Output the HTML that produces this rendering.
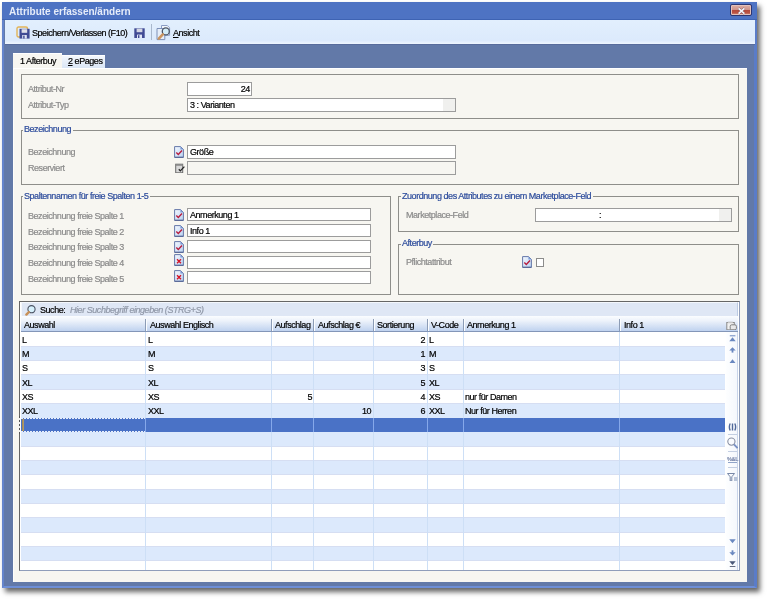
<!DOCTYPE html><html><head><meta charset="utf-8"><style>
*{box-sizing:border-box;margin:0;padding:0}
html,body{width:768px;height:599px;overflow:hidden;background:#fff;font-family:"Liberation Sans",sans-serif;font-size:9px;letter-spacing:-0.45px;color:#000}
#root{position:absolute;left:0;top:0;width:768px;height:599px;filter:blur(0.35px)}
.a{position:absolute}
.t{line-height:10px;white-space:nowrap;will-change:transform;-webkit-text-stroke:0.2px currentColor}
#win{left:2px;top:2px;width:755px;height:586px;background:#6279a8;box-shadow:3px 4px 5px rgba(0,0,0,.6);border-left:2px solid #6484cc;border-bottom:2px solid #6d8ed6;border-right:3px solid #5a7cc8}
#title{left:2px;top:2px;width:755px;height:17.7px;background:#4e73c3;border-bottom:1px solid #3e63b3}
#title span{position:absolute;will-change:transform;left:7.4px;top:4.5px;line-height:10px;font-size:10px;font-weight:bold;letter-spacing:0px;color:#e6ecf9}
#close{left:730.2px;top:4.2px;width:21.5px;height:11.5px;border:1px solid #2a3572;border-radius:2px;box-shadow:inset 0 0 0 1px #e4c2ba;background:linear-gradient(#dcb0a8 0%,#cf948a 45%,#b4483a 52%,#bb5544 80%,#d9a39a 100%)}
#tb{left:5px;top:19.75px;width:749.5px;height:24.3px;background:linear-gradient(#e2effd,#dceafc 85%,#eef5fe)}
#tbl{left:5px;top:44.4px;width:749.5px;height:1px;background:#586c9c}
#panel{left:12.7px;top:67.7px;width:734.3px;height:514.3px;background:#f7f6f1;border-top:1px solid #fff;border-left:1px solid #fdfdfb}
.grp{border:1px solid #8e8e8a}
.cap{color:#2d4c9c;background:#f7f6f1;padding:0 1.5px 0 1px}
.lbl{color:#8a8a8a}
.tx{border:1px solid #9c9c9c;background:#fff}
.row{left:20.5px;width:704.5px;height:14.27px}
.cs{width:1px;background:#cddff6}
</style></head><body>
<div id="root">
<svg width="0" height="0" style="position:absolute"><defs><linearGradient id="gd" x1="0" y1="0" x2="1" y2="1"><stop offset="0" stop-color="#f4f8ff"/><stop offset="1" stop-color="#b9d2f2"/></linearGradient></defs></svg>
<div id="win" class="a"></div>
<div id="title" class="a"><span>Attribute erfassen/ändern</span></div>
<div id="close" class="a"></div>
<svg class="a" style="left:736.7px;top:6.5px;" width="9" height="8" viewBox="0 0 9 8"><path d="M1.6 1.3L7.4 6.7M7.4 1.3L1.6 6.7" stroke="#6a4a58" stroke-width="2.6" opacity=".6"/><path d="M1.6 1.3L7.4 6.7M7.4 1.3L1.6 6.7" stroke="#f4f4fa" stroke-width="1.6"/></svg>
<div id="tb" class="a"></div><div id="tbl" class="a"></div>
<div class="a t " style="left:32px;top:28.00px;">Speichern/Verlassen (F10)</div>
<div class="a t " style="left:173.3px;top:28.00px;"><u>A</u>nsicht</div>
<div class="a " style="left:151.2px;top:23.8px;width:1.00px;height:16.20px;background:#a9b8cc"></div>
<svg class="a" style="left:15.5px;top:25.8px;" width="15" height="13" viewBox="0 0 15 13"><rect x="1" y="1" width="10.5" height="10" rx="1.5" fill="none" stroke="#e2b458" stroke-width="1.4"/><path d="M3.5 2.8H13.6V12.6H3.5Z" fill="#3f4a94"/><rect x="5.6" y="3.2" width="5.6" height="3.6" fill="#dfe0ea"/><rect x="6.2" y="9" width="4.6" height="3.6" fill="#dfe4f4"/><rect x="7.2" y="9.6" width="1.4" height="3" fill="#3f4a94"/></svg>
<svg class="a" style="left:134.2px;top:27.5px;" width="11" height="10.5" viewBox="0 0 11 10.5"><path d="M.3 .3H10.7V10.2H.3Z" fill="#404a94"/><rect x="2.6" y=".6" width="5.8" height="3.6" fill="#d4d6e4"/><rect x="3" y="6.6" width="5" height="3.6" fill="#dfe4f4"/><rect x="4" y="7.2" width="1.4" height="3" fill="#404a94"/></svg>
<svg class="a" style="left:156px;top:24px;" width="15" height="17" viewBox="0 0 15 17"><path d="M5.5 1.5H11.3L13.6 3.8V11.3H5.5Z" fill="#f2f7fd" stroke="#8a9cc4" stroke-width="1"/><path d="M1 4.5H8.8V15.6H1Z" fill="#e6eef9" stroke="#7d90b8" stroke-width="1"/><circle cx="9.8" cy="7.4" r="3.5" fill="#d2ecf8" stroke="#4a5262" stroke-width="1.3"/><path d="M6.8 10.4L2.8 14.6" stroke="#c99460" stroke-width="2.6" stroke-linecap="round"/></svg>
<div class="a " style="left:62.2px;top:54.5px;width:42.60px;height:13.50px;background:linear-gradient(#f4f8fd,#d9e5f5);border-top:1px solid #fff"></div>
<div class="a " style="left:12.7px;top:53.1px;width:49.50px;height:14.90px;background:#f7f6f1;border-top:1px solid #fff"></div>
<div id="panel" class="a"></div>
<div class="a t " style="left:19.5px;top:56.00px;">1 Afterbuy</div>
<div class="a t " style="left:67.6px;top:56.00px;"><u>2</u> ePages</div>
<div class="a grp" style="left:21px;top:74px;width:718.00px;height:45.30px;"></div>
<div class="a t lbl" style="left:28px;top:84.10px;">Attribut-Nr</div>
<div class="a t lbl" style="left:28px;top:99.60px;">Attribut-Typ</div>
<div class="a tx" style="left:187.2px;top:82.2px;width:64.70px;height:13.50px;"></div>
<div class="a t" style="left:187.2px;width:62.8px;text-align:right;top:83.9px">24</div>
<div class="a tx" style="left:187.2px;top:98.1px;width:268.50px;height:13.80px;"><div class="a" style="right:0;top:0;bottom:0;width:12px;background:#f0f0ee"></div></div>
<div class="a t " style="left:189.6px;top:100.00px;">3 : Varianten</div>
<div class="a grp" style="left:20.8px;top:129.8px;width:718.20px;height:55.00px;"></div>
<div class="a t cap" style="left:23.3px;top:123.70px;">Bezeichnung</div>
<div class="a t lbl" style="left:28px;top:147.00px;">Bezeichnung</div>
<div class="a t lbl" style="left:28px;top:162.60px;">Reserviert</div>
<div class="a tx" style="left:187.2px;top:145.3px;width:268.50px;height:13.40px;"></div>
<div class="a t " style="left:189.6px;top:147.00px;">Größe</div>
<div class="a tx" style="left:187.2px;top:161px;width:268.50px;height:13.70px;background:#f7f6f1"></div>
<svg class="a" style="left:174.3px;top:146.1px;" width="10" height="12" viewBox="0 0 10 12"><path d="M0.6 0.6H6.6L9.4 3.4V11.4H0.6Z" fill="url(#gd)" stroke="#6678a8" stroke-width="1"/><path d="M6.4 0.6L9.4 3.6H6.4Z" fill="#7d9ad4"/><path d="M0.6 11.2H9.4" stroke="#4a5888" stroke-width=".8"/><path d="M2.3 6.6L4.3 8.6L8 4.6" fill="none" stroke="#b81e3e" stroke-width="1.4"/></svg>
<svg class="a" style="left:174.5px;top:162.8px;" width="10" height="10.5" viewBox="0 0 10 10.5"><rect x=".7" y="1.2" width="7" height="8.6" fill="#d8d8d8" stroke="#6a6a6a" stroke-width="1"/><rect x=".7" y="1.2" width="7" height="1.6" fill="#8a8a8a"/><path d="M3.8 6.3L5.3 7.9L9.4 3.6" fill="none" stroke="#222" stroke-width="1.25"/></svg>
<div class="a grp" style="left:20.8px;top:196.3px;width:369.80px;height:98.30px;"></div>
<div class="a t cap" style="left:23.4px;top:190.75px;">Spaltennamen für freie Spalten 1-5</div>
<div class="a t lbl" style="left:28px;top:210.60px;">Bezeichnung freie Spalte 1</div>
<div class="a tx" style="left:187.2px;top:208.4px;width:184.30px;height:13.00px;"></div>
<div class="a t " style="left:189.6px;top:210.00px;">Anmerkung 1</div>
<svg class="a" style="left:174px;top:209.0px;" width="10" height="12" viewBox="0 0 10 12"><path d="M0.6 0.6H6.6L9.4 3.4V11.4H0.6Z" fill="url(#gd)" stroke="#6678a8" stroke-width="1"/><path d="M6.4 0.6L9.4 3.6H6.4Z" fill="#7d9ad4"/><path d="M0.6 11.2H9.4" stroke="#4a5888" stroke-width=".8"/><path d="M2.3 6.6L4.3 8.6L8 4.6" fill="none" stroke="#b81e3e" stroke-width="1.4"/></svg>
<div class="a t lbl" style="left:28px;top:226.60px;">Bezeichnung freie Spalte 2</div>
<div class="a tx" style="left:187.2px;top:224.4px;width:184.30px;height:13.00px;"></div>
<div class="a t " style="left:189.6px;top:226.00px;">Info 1</div>
<svg class="a" style="left:174px;top:225.0px;" width="10" height="12" viewBox="0 0 10 12"><path d="M0.6 0.6H6.6L9.4 3.4V11.4H0.6Z" fill="url(#gd)" stroke="#6678a8" stroke-width="1"/><path d="M6.4 0.6L9.4 3.6H6.4Z" fill="#7d9ad4"/><path d="M0.6 11.2H9.4" stroke="#4a5888" stroke-width=".8"/><path d="M2.3 6.6L4.3 8.6L8 4.6" fill="none" stroke="#b81e3e" stroke-width="1.4"/></svg>
<div class="a t lbl" style="left:28px;top:242.30px;">Bezeichnung freie Spalte 3</div>
<div class="a tx" style="left:187.2px;top:240.1px;width:184.30px;height:13.00px;"></div>
<svg class="a" style="left:174px;top:240.7px;" width="10" height="12" viewBox="0 0 10 12"><path d="M0.6 0.6H6.6L9.4 3.4V11.4H0.6Z" fill="url(#gd)" stroke="#6678a8" stroke-width="1"/><path d="M6.4 0.6L9.4 3.6H6.4Z" fill="#7d9ad4"/><path d="M0.6 11.2H9.4" stroke="#4a5888" stroke-width=".8"/><path d="M2.3 6.6L4.3 8.6L8 4.6" fill="none" stroke="#b81e3e" stroke-width="1.4"/></svg>
<div class="a t lbl" style="left:28px;top:257.70px;">Bezeichnung freie Spalte 4</div>
<div class="a tx" style="left:187.2px;top:255.5px;width:184.30px;height:13.00px;"></div>
<svg class="a" style="left:174px;top:254.4px;" width="10" height="12" viewBox="0 0 10 12"><path d="M0.6 0.6H6.6L9.4 3.4V11.4H0.6Z" fill="url(#gd)" stroke="#6678a8" stroke-width="1"/><path d="M6.4 0.6L9.4 3.6H6.4Z" fill="#7d9ad4"/><path d="M0.6 11.2H9.4" stroke="#4a5888" stroke-width=".8"/><path d="M3 5.3L7 9.3M7 5.3L3 9.3" fill="none" stroke="#d41426" stroke-width="1.4"/></svg>
<div class="a t lbl" style="left:28px;top:273.60px;">Bezeichnung freie Spalte 5</div>
<div class="a tx" style="left:187.2px;top:271.4px;width:184.30px;height:13.00px;"></div>
<svg class="a" style="left:174px;top:270.29999999999995px;" width="10" height="12" viewBox="0 0 10 12"><path d="M0.6 0.6H6.6L9.4 3.4V11.4H0.6Z" fill="url(#gd)" stroke="#6678a8" stroke-width="1"/><path d="M6.4 0.6L9.4 3.6H6.4Z" fill="#7d9ad4"/><path d="M0.6 11.2H9.4" stroke="#4a5888" stroke-width=".8"/><path d="M3 5.3L7 9.3M7 5.3L3 9.3" fill="none" stroke="#d41426" stroke-width="1.4"/></svg>
<div class="a grp" style="left:398px;top:196.3px;width:341.00px;height:35.90px;"></div>
<div class="a t cap" style="left:400.7px;top:190.75px;">Zuordnung des Attributes zu einem Marketplace-Feld</div>
<div class="a t lbl" style="left:405.7px;top:209.90px;">Marketplace-Feld</div>
<div class="a tx" style="left:535px;top:208.1px;width:196.90px;height:13.80px;"><div class="a" style="right:0;top:0;bottom:0;width:12px;background:#f0f0ee"></div></div>
<div class="a t " style="left:598.8px;top:209.50px;">:</div>
<div class="a grp" style="left:398px;top:243.5px;width:341.00px;height:51.10px;"></div>
<div class="a t cap" style="left:400.7px;top:238.00px;">Afterbuy</div>
<div class="a t lbl" style="left:405.7px;top:256.90px;">Pflichtattribut</div>
<svg class="a" style="left:521.9px;top:256.1px;" width="10" height="12" viewBox="0 0 10 12"><path d="M0.6 0.6H6.6L9.4 3.4V11.4H0.6Z" fill="url(#gd)" stroke="#6678a8" stroke-width="1"/><path d="M6.4 0.6L9.4 3.6H6.4Z" fill="#7d9ad4"/><path d="M0.6 11.2H9.4" stroke="#4a5888" stroke-width=".8"/><path d="M2.3 6.6L4.3 8.6L8 4.6" fill="none" stroke="#b81e3e" stroke-width="1.4"/></svg>
<div class="a " style="left:535.6px;top:258px;width:8.80px;height:8.50px;border:1px solid #8c8c8c;background:#fff"></div>
<div class="a " style="left:19px;top:301.4px;width:720.60px;height:269.90px;background:#fff;border:1px solid #666;border-right-color:#8f9dba;border-bottom-color:#8f9dba"></div>
<div class="a " style="left:20.5px;top:302.4px;width:717.70px;height:14.60px;background:#dfe7f5;border:1px solid #f4f7fc;border-bottom-color:#a9b9d2;border-right-color:#bccbe3"></div>
<div class="a t " style="left:40.1px;top:304.50px;">Suche:</div>
<svg class="a" style="left:23.5px;top:304.5px;" width="13" height="11" viewBox="0 0 13 11"><circle cx="7.5" cy="4.2" r="3.6" fill="#d6f0fc" stroke="#4a5262" stroke-width="1.1"/><path d="M4.9 7L2.4 9.6" stroke="#c89058" stroke-width="2.4" stroke-linecap="round"/></svg>
<div class="a t " style="left:70px;top:304.50px;font-style:italic;color:#9098a8">Hier Suchbegriff eingeben (STRG+S)</div>
<div class="a " style="left:20.5px;top:316.4px;width:717.70px;height:15.60px;background:linear-gradient(#fbfdff,#eef3fb 30%,#bfd2ef);border-bottom:1px solid #8396b8"></div>
<div class="a t " style="left:24.3px;top:320.20px;">Auswahl</div>
<div class="a t " style="left:149.5px;top:320.20px;">Auswahl Englisch</div>
<div class="a t " style="left:275.3px;top:320.20px;">Aufschlag</div>
<div class="a t " style="left:317.7px;top:320.20px;">Aufschlag €</div>
<div class="a t " style="left:377.0px;top:320.20px;">Sortierung</div>
<div class="a t " style="left:431.40000000000003px;top:320.20px;">V-Code</div>
<div class="a t " style="left:467.2px;top:320.20px;">Anmerkung 1</div>
<div class="a t " style="left:623.5999999999999px;top:320.20px;">Info 1</div>
<div class="a " style="left:145.2px;top:318.6px;width:1.00px;height:12.40px;background:#8c9cb6"></div>
<div class="a " style="left:146.2px;top:318.6px;width:1.00px;height:12.40px;background:#fbfdff"></div>
<div class="a " style="left:271.0px;top:318.6px;width:1.00px;height:12.40px;background:#8c9cb6"></div>
<div class="a " style="left:272.0px;top:318.6px;width:1.00px;height:12.40px;background:#fbfdff"></div>
<div class="a " style="left:313.4px;top:318.6px;width:1.00px;height:12.40px;background:#8c9cb6"></div>
<div class="a " style="left:314.4px;top:318.6px;width:1.00px;height:12.40px;background:#fbfdff"></div>
<div class="a " style="left:372.7px;top:318.6px;width:1.00px;height:12.40px;background:#8c9cb6"></div>
<div class="a " style="left:373.7px;top:318.6px;width:1.00px;height:12.40px;background:#fbfdff"></div>
<div class="a " style="left:427.1px;top:318.6px;width:1.00px;height:12.40px;background:#8c9cb6"></div>
<div class="a " style="left:428.1px;top:318.6px;width:1.00px;height:12.40px;background:#fbfdff"></div>
<div class="a " style="left:462.9px;top:318.6px;width:1.00px;height:12.40px;background:#8c9cb6"></div>
<div class="a " style="left:463.9px;top:318.6px;width:1.00px;height:12.40px;background:#fbfdff"></div>
<div class="a " style="left:619.3px;top:318.6px;width:1.00px;height:12.40px;background:#8c9cb6"></div>
<div class="a " style="left:620.3px;top:318.6px;width:1.00px;height:12.40px;background:#fbfdff"></div>
<div class="a " style="left:20.5px;top:346.29px;width:704.50px;height:14.29px;background:#dce9fc"></div>
<div class="a " style="left:20.5px;top:345.79px;width:704.50px;height:1.00px;background:#d6def2"></div>
<div class="a " style="left:20.5px;top:360.08px;width:704.50px;height:1.00px;background:#d6def2"></div>
<div class="a " style="left:20.5px;top:374.87px;width:704.50px;height:14.29px;background:#dce9fc"></div>
<div class="a " style="left:20.5px;top:374.37px;width:704.50px;height:1.00px;background:#d6def2"></div>
<div class="a " style="left:20.5px;top:388.65999999999997px;width:704.50px;height:1.00px;background:#d6def2"></div>
<div class="a " style="left:20.5px;top:403.45px;width:704.50px;height:14.29px;background:#dce9fc"></div>
<div class="a " style="left:20.5px;top:402.95px;width:704.50px;height:1.00px;background:#d6def2"></div>
<div class="a " style="left:20.5px;top:417.74px;width:704.50px;height:14.29px;background:#4a72c6"></div>
<div class="a " style="left:20.5px;top:417.74px;width:125.00px;height:1.00px;background:repeating-linear-gradient(90deg,#e8eefa 0 2px,#4a72c6 2px 3px)"></div>
<div class="a " style="left:20.5px;top:431.03000000000003px;width:125.00px;height:1.00px;background:repeating-linear-gradient(90deg,#e8eefa 0 2px,#4a72c6 2px 3px)"></div>
<div class="a " style="left:19px;top:415.74px;width:1.00px;height:18.29px;background:repeating-linear-gradient(#555 0 2px,#f0f0f0 2px 4px)"></div>
<div class="a " style="left:22px;top:418.74px;width:2.40px;height:12.29px;background:linear-gradient(90deg,#9a8450,#b8a070)"></div>
<div class="a " style="left:20.5px;top:432.03px;width:704.50px;height:14.29px;background:#dce9fc"></div>
<div class="a " style="left:20.5px;top:445.82px;width:704.50px;height:1.00px;background:#d6def2"></div>
<div class="a " style="left:20.5px;top:460.61px;width:704.50px;height:14.29px;background:#dce9fc"></div>
<div class="a " style="left:20.5px;top:460.11px;width:704.50px;height:1.00px;background:#d6def2"></div>
<div class="a " style="left:20.5px;top:474.4px;width:704.50px;height:1.00px;background:#d6def2"></div>
<div class="a " style="left:20.5px;top:489.19px;width:704.50px;height:14.29px;background:#dce9fc"></div>
<div class="a " style="left:20.5px;top:488.69px;width:704.50px;height:1.00px;background:#d6def2"></div>
<div class="a " style="left:20.5px;top:502.98px;width:704.50px;height:1.00px;background:#d6def2"></div>
<div class="a " style="left:20.5px;top:517.77px;width:704.50px;height:14.29px;background:#dce9fc"></div>
<div class="a " style="left:20.5px;top:517.27px;width:704.50px;height:1.00px;background:#d6def2"></div>
<div class="a " style="left:20.5px;top:531.56px;width:704.50px;height:1.00px;background:#d6def2"></div>
<div class="a " style="left:20.5px;top:546.35px;width:704.50px;height:14.29px;background:#dce9fc"></div>
<div class="a " style="left:20.5px;top:545.85px;width:704.50px;height:1.00px;background:#d6def2"></div>
<div class="a " style="left:20.5px;top:560.14px;width:704.50px;height:1.00px;background:#d6def2"></div>
<div class="a cs" style="left:145.2px;top:332px;width:1.00px;height:238.00px;"></div>
<div class="a " style="left:145.2px;top:417.74px;width:1.00px;height:14.29px;background:#86a8ea"></div>
<div class="a cs" style="left:271.0px;top:332px;width:1.00px;height:238.00px;"></div>
<div class="a " style="left:271.0px;top:417.74px;width:1.00px;height:14.29px;background:#86a8ea"></div>
<div class="a cs" style="left:313.4px;top:332px;width:1.00px;height:238.00px;"></div>
<div class="a " style="left:313.4px;top:417.74px;width:1.00px;height:14.29px;background:#86a8ea"></div>
<div class="a cs" style="left:372.7px;top:332px;width:1.00px;height:238.00px;"></div>
<div class="a " style="left:372.7px;top:417.74px;width:1.00px;height:14.29px;background:#86a8ea"></div>
<div class="a cs" style="left:427.1px;top:332px;width:1.00px;height:238.00px;"></div>
<div class="a " style="left:427.1px;top:417.74px;width:1.00px;height:14.29px;background:#86a8ea"></div>
<div class="a cs" style="left:462.9px;top:332px;width:1.00px;height:238.00px;"></div>
<div class="a " style="left:462.9px;top:417.74px;width:1.00px;height:14.29px;background:#86a8ea"></div>
<div class="a cs" style="left:619.3px;top:332px;width:1.00px;height:238.00px;"></div>
<div class="a " style="left:619.3px;top:417.74px;width:1.00px;height:14.29px;background:#86a8ea"></div>
<div class="a t " style="left:22.3px;top:334.90px;">L</div>
<div class="a t " style="left:147.5px;top:334.90px;">L</div>
<div class="a t" style="left:373.2px;width:52.10px;text-align:right;top:334.90px">2</div>
<div class="a t " style="left:429.40000000000003px;top:334.90px;">L</div>
<div class="a t " style="left:22.3px;top:349.19px;">M</div>
<div class="a t " style="left:147.5px;top:349.19px;">M</div>
<div class="a t" style="left:373.2px;width:52.10px;text-align:right;top:349.19px">1</div>
<div class="a t " style="left:429.40000000000003px;top:349.19px;">M</div>
<div class="a t " style="left:22.3px;top:363.48px;">S</div>
<div class="a t " style="left:147.5px;top:363.48px;">S</div>
<div class="a t" style="left:373.2px;width:52.10px;text-align:right;top:363.48px">3</div>
<div class="a t " style="left:429.40000000000003px;top:363.48px;">S</div>
<div class="a t " style="left:22.3px;top:377.77px;">XL</div>
<div class="a t " style="left:147.5px;top:377.77px;">XL</div>
<div class="a t" style="left:373.2px;width:52.10px;text-align:right;top:377.77px">5</div>
<div class="a t " style="left:429.40000000000003px;top:377.77px;">XL</div>
<div class="a t " style="left:22.3px;top:392.06px;">XS</div>
<div class="a t " style="left:147.5px;top:392.06px;">XS</div>
<div class="a t" style="left:271.5px;width:40.10px;text-align:right;top:392.06px">5</div>
<div class="a t" style="left:373.2px;width:52.10px;text-align:right;top:392.06px">4</div>
<div class="a t " style="left:429.40000000000003px;top:392.06px;">XS</div>
<div class="a t " style="left:465.2px;top:392.06px;">nur für Damen</div>
<div class="a t " style="left:22.3px;top:406.35px;">XXL</div>
<div class="a t " style="left:147.5px;top:406.35px;">XXL</div>
<div class="a t" style="left:313.9px;width:57.00px;text-align:right;top:406.35px">10</div>
<div class="a t" style="left:373.2px;width:52.10px;text-align:right;top:406.35px">6</div>
<div class="a t " style="left:429.40000000000003px;top:406.35px;">XXL</div>
<div class="a t " style="left:465.2px;top:406.35px;">Nur für Herren</div>
<div class="a " style="left:725.5px;top:332px;width:12.50px;height:238.20px;background:linear-gradient(90deg,#fdfeff,#f4f7fc)"></div>
<div class="a " style="left:737px;top:332px;width:1.00px;height:238.20px;background:#c9d5ea"></div>
<svg class="a" style="left:726px;top:320.5px;" width="11" height="9.5" viewBox="0 0 11 9.5"><rect x=".8" y="1.5" width="7.5" height="7.3" fill="#f0f0f0" stroke="#8a8a8a" stroke-width="1"/><rect x="1.8" y=".6" width="5" height="1.6" fill="#c8c8c8"/><rect x="4.2" y="3.8" width="6.2" height="5" rx="1.5" fill="#e8e8e8" stroke="#808080" stroke-width="1"/></svg>
<svg class="a" style="left:728.8px;top:334.6px;" width="7" height="7" viewBox="0 0 7 7"><rect x=".8" y=".3" width="5.6" height="1" fill="#6a88c0"/><path d="M.3 6.3L3.5 2.2L6.7 6.3Z" fill="#6a88c0"/></svg>
<svg class="a" style="left:728.8px;top:346.6px;" width="7" height="6" viewBox="0 0 7 6"><path d="M.3 3.6L3.5 .3L6.7 3.6Z" fill="#6a88c0"/><rect x="2.6" y="3" width="1.8" height="2.6" fill="#6a88c0"/></svg>
<svg class="a" style="left:728.8px;top:358.6px;" width="7" height="4.5" viewBox="0 0 7 4.5"><path d="M.3 4.3L3.5 .3L6.7 4.3Z" fill="#6a88c0"/></svg>
<svg class="a" style="left:728px;top:422.8px;" width="9" height="8" viewBox="0 0 9 8"><path d="M2.2 .5Q.5 4 2.2 7.5M6.8 .5Q8.5 4 6.8 7.5M4.5 .6V7.4" fill="none" stroke="#50689a" stroke-width="1.4"/></svg>
<div class="a " style="left:728px;top:434.4px;width:8.50px;height:1.00px;background:#c4cfe2"></div>
<svg class="a" style="left:726.8px;top:437px;" width="11.5" height="12" viewBox="0 0 11.5 12"><circle cx="4.4" cy="4.6" r="3.6" fill="#fafcff" stroke="#8890a4" stroke-width="1.1"/><path d="M7 7.4L10.6 11.2" stroke="#7890c4" stroke-width="1.9"/></svg>
<div class="a " style="left:728px;top:450.8px;width:8.50px;height:1.00px;background:#c4cfe2"></div>
<div class="a" style="will-change:transform;left:727.2px;top:456.2px;font-size:5.5px;line-height:6px;letter-spacing:-0.3px;color:#6878a0;font-weight:bold">%&amp;L</div>
<div class="a " style="left:727.5px;top:462.2px;width:9.00px;height:1.00px;background:#90a4c8"></div>
<div class="a " style="left:728px;top:467.1px;width:8.50px;height:1.00px;background:#c4cfe2"></div>
<svg class="a" style="left:727px;top:472.5px;" width="11" height="8.5" viewBox="0 0 11 8.5"><path d="M.5 .5H7.5L4.8 3.8V8H3.2V3.8Z" fill="none" stroke="#7888a8" stroke-width="1"/><rect x="7" y="4" width="3.5" height="4" fill="#b8c4d8"/></svg>
<svg class="a" style="left:728.8px;top:539.4px;" width="7" height="4.5" viewBox="0 0 7 4.5"><path d="M.3 .2L3.5 4.2L6.7 .2Z" fill="#6a88c0"/></svg>
<svg class="a" style="left:728.8px;top:550px;" width="7" height="6" viewBox="0 0 7 6"><rect x="2.6" y=".3" width="1.8" height="2.6" fill="#6a88c0"/><path d="M.3 2.3L3.5 5.6L6.7 2.3Z" fill="#6a88c0"/></svg>
<svg class="a" style="left:728.8px;top:560.6px;" width="7" height="6.5" viewBox="0 0 7 6.5"><path d="M.3 .3L3.5 4L6.7 .3Z" fill="#4a5878"/><rect x=".8" y="5.2" width="5.6" height="1.1" fill="#404860"/></svg>
</div></body></html>
